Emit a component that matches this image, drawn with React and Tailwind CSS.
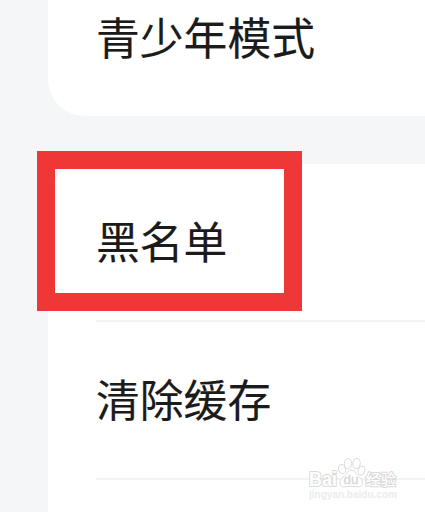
const font = 'font-["Noto_Sans_CJK_SC",sans-serif]';

function Row({ label, highlighted }) {
  return (
    <div className="relative ml-12 flex h-[158px] items-center border-b-2 border-[#f4f4f4]">
      <span className="mb-1 whitespace-nowrap text-[43.8px] leading-[64px] [-webkit-text-stroke:0.15px_#1b1b1b]">{label}</span>
      {highlighted && (
        <div className="absolute -left-[59.5px] -top-[12.5px] h-[160px] w-[265px] border-[18px] border-[#f03737]" />
      )}
    </div>
  );
}

function Watermark() {
  return (
    <div className='absolute left-[308px] top-[456px] h-[48px] w-[92px] font-["Liberation_Sans",sans-serif]'>
      <svg width="92" height="48" viewBox="0 0 92 48" fill="#fff" stroke="#dadada" strokeWidth="1">
        <text x="1" y="29.500" fontSize="19.500" fontWeight="700" textLength="28" lengthAdjust="spacingAndGlyphs" paintOrder="stroke" strokeWidth="2">Bai</text>
        <g strokeLinejoin="round">
          <ellipse cx="34" cy="13" rx="3.400" ry="4.500" transform="rotate(-12 34 13)" />
          <ellipse cx="40" cy="7.500" rx="3.700" ry="5" />
          <ellipse cx="48.500" cy="7.500" rx="3.700" ry="5" transform="rotate(10 48.500 7.500)" />
          <ellipse cx="53.500" cy="14.500" rx="3.300" ry="4.500" transform="rotate(18 53.500 14.500)" />
          <path d="M43.500 14c-4 0-5 4-7.500 6.500-3 2.500-4.500 4-4 7.500.6 3.500 4 3 7 2.500 3-.3 6-.3 9 0 3.500.4 6 .3 6.500-3 .4-3.500-1.500-4.500-4-7C48 18 47.500 14 43.500 14z" />
        </g>
        <text x="35.500" y="28" fontSize="13" textLength="15" lengthAdjust="spacingAndGlyphs" fill="#d6d6d6" stroke="#d6d6d6" strokeWidth=".3">du</text>
        <text x="57.500" y="29" fontSize="15.300" fontWeight="500" className='font-["Noto_Sans_CJK_SC",sans-serif]' paintOrder="stroke" strokeWidth="2">经验</text>
        <text x="1" y="42" fontSize="10.500" fontWeight="700" textLength="88" lengthAdjust="spacingAndGlyphs" fill="#ececec" stroke="none">jingyan.baidu.com</text>
      </svg>
    </div>
  );
}

export default function App() {
  return (
    <div className={`relative flex h-[512px] w-[425px] flex-col gap-12 overflow-hidden bg-[#f5f6f8] pl-12 text-[#1b1b1b] ${font}`}>
      <section className="flex h-[115.5px] shrink-0 items-end rounded-bl-[37px] bg-white pb-12 pl-12">
        <span className="whitespace-nowrap text-[43.8px] leading-[64px] [-webkit-text-stroke:0.15px_#1b1b1b]">青少年模式</span>
      </section>
      <section className="h-[400px] shrink-0 rounded-tl-[37px] bg-white">
        <Row label="黑名单" highlighted />
        <Row label="清除缓存" />
      </section>
      <Watermark />
    </div>
  );
}
